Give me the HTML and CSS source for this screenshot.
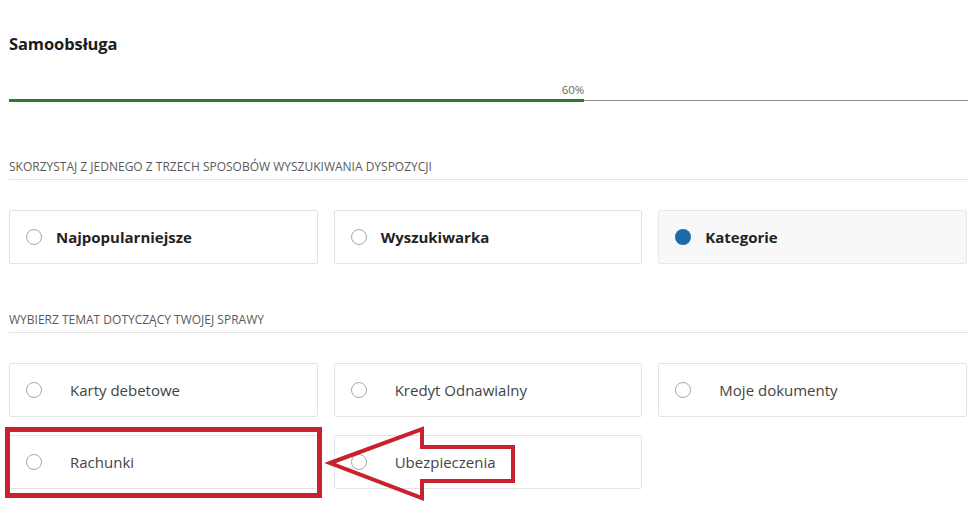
FILE: index.html
```html
<!DOCTYPE html>
<html lang="pl">
<head>
<meta charset="utf-8">
<title>Samoobsługa</title>
<link rel="stylesheet" href="styles.css">
</head>
<body>
<div class="page">
  <h1 class="title">Samoobsługa</h1>
  <div class="progress">
    <div class="pct" style="width:60%">60%</div>
    <div class="track">
      <div class="fill" style="width:60%"></div>
      <div class="rest"></div>
    </div>
  </div>

  <div class="section-title first">Skorzystaj z jednego z trzech sposobów wyszukiwania dyspozycji</div>
  <div class="grid">
    <div class="card"><span class="radio"></span><span class="label bold">Najpopularniejsze</span></div>
    <div class="card"><span class="radio"></span><span class="label bold">Wyszukiwarka</span></div>
    <div class="card selected"><span class="radio checked"></span><span class="label bold">Kategorie</span></div>
  </div>

  <div class="section-title second">Wybierz temat dotyczący twojej sprawy</div>
  <div class="grid topics">
    <div class="card"><span class="radio"></span><span class="label wide">Karty debetowe</span></div>
    <div class="card"><span class="radio"></span><span class="label wide">Kredyt Odnawialny</span></div>
    <div class="card"><span class="radio"></span><span class="label wide">Moje dokumenty</span></div>
    <div class="card"><span class="radio"></span><span class="label wide">Rachunki</span></div>
    <div class="card"><span class="radio"></span><span class="label wide">Ubezpieczenia</span></div>
  </div>

  <svg class="annotation" width="978" height="516" viewBox="0 0 978 516" aria-hidden="true">
    <rect x="7.5" y="429.5" width="312" height="66" fill="none" stroke="#c8222e" stroke-width="5"/>
    <polygon points="330,463 422,429 422,447 513,447 513,481 422,481 422,498" fill="none" stroke="#c8222e" stroke-width="4" stroke-linejoin="miter"/>
  </svg>
</div>
</body>
</html>
```
FILE: styles.css
```css
html, body {
  margin: 0;
  padding: 0;
  background: #ffffff;
}

body {
  font-family: "Open Sans", "Noto Sans", sans-serif;
  color: #333333;
}

.page {
  position: relative;
  width: 978px;
  height: 516px;
  box-sizing: border-box;
  padding: 33px 10px 0 9px;
  overflow: hidden;
}

.title {
  margin: 0;
  font-size: 16.5px;
  line-height: 22px;
  font-weight: 700;
  color: #1c1c1c;
  letter-spacing: -0.1px;
}

.progress {
  margin-top: 28px;
}

.pct {
  font-size: 11.5px;
  line-height: 14px;
  color: #666666;
  text-align: right;
  height: 14px;
  margin-bottom: 2px;
}

.track {
  display: flex;
  align-items: center;
  height: 3px;
}

.fill {
  height: 3px;
  background: #2a7b2e;
}

.rest {
  flex: 1;
  height: 0;
  border-top: 1px solid #8c8c8c;
}

.section-title {
  font-size: 12px;
  line-height: 16px;
  text-transform: uppercase;
  color: #5a5a5a;
  padding-bottom: 4px;
  border-bottom: 1px solid #e4e4e4;
}

.section-title.first {
  margin-top: 57px;
}

.section-title.second {
  margin-top: 48px;
}

.grid {
  display: grid;
  grid-template-columns: repeat(3, 1fr);
  column-gap: 16px;
  row-gap: 18px;
  margin-top: 30px;
  margin-right: 1px;
}

.card {
  display: flex;
  align-items: center;
  height: 54px;
  box-sizing: border-box;
  border: 1px solid #e3e3e3;
  border-radius: 2px;
  background: #ffffff;
  padding-left: 16px;
}

.card.selected {
  background: #f8f8f8;
  border-color: #e8e8e8;
}

.radio {
  width: 16px;
  height: 16px;
  box-sizing: border-box;
  border: 1px solid #a8a8a8;
  border-radius: 50%;
  flex-shrink: 0;
  background: #ffffff;
}

.radio.checked {
  border: none;
  background: #1a6bab;
}

.label {
  font-size: 15px;
  line-height: 20px;
  color: #444444;
}

.label.bold {
  font-weight: 700;
  color: #232323;
  margin-left: 14px;
}

.label.wide {
  margin-left: 28px;
}

.annotation {
  position: absolute;
  left: 0;
  top: 0;
  pointer-events: none;
}
```
